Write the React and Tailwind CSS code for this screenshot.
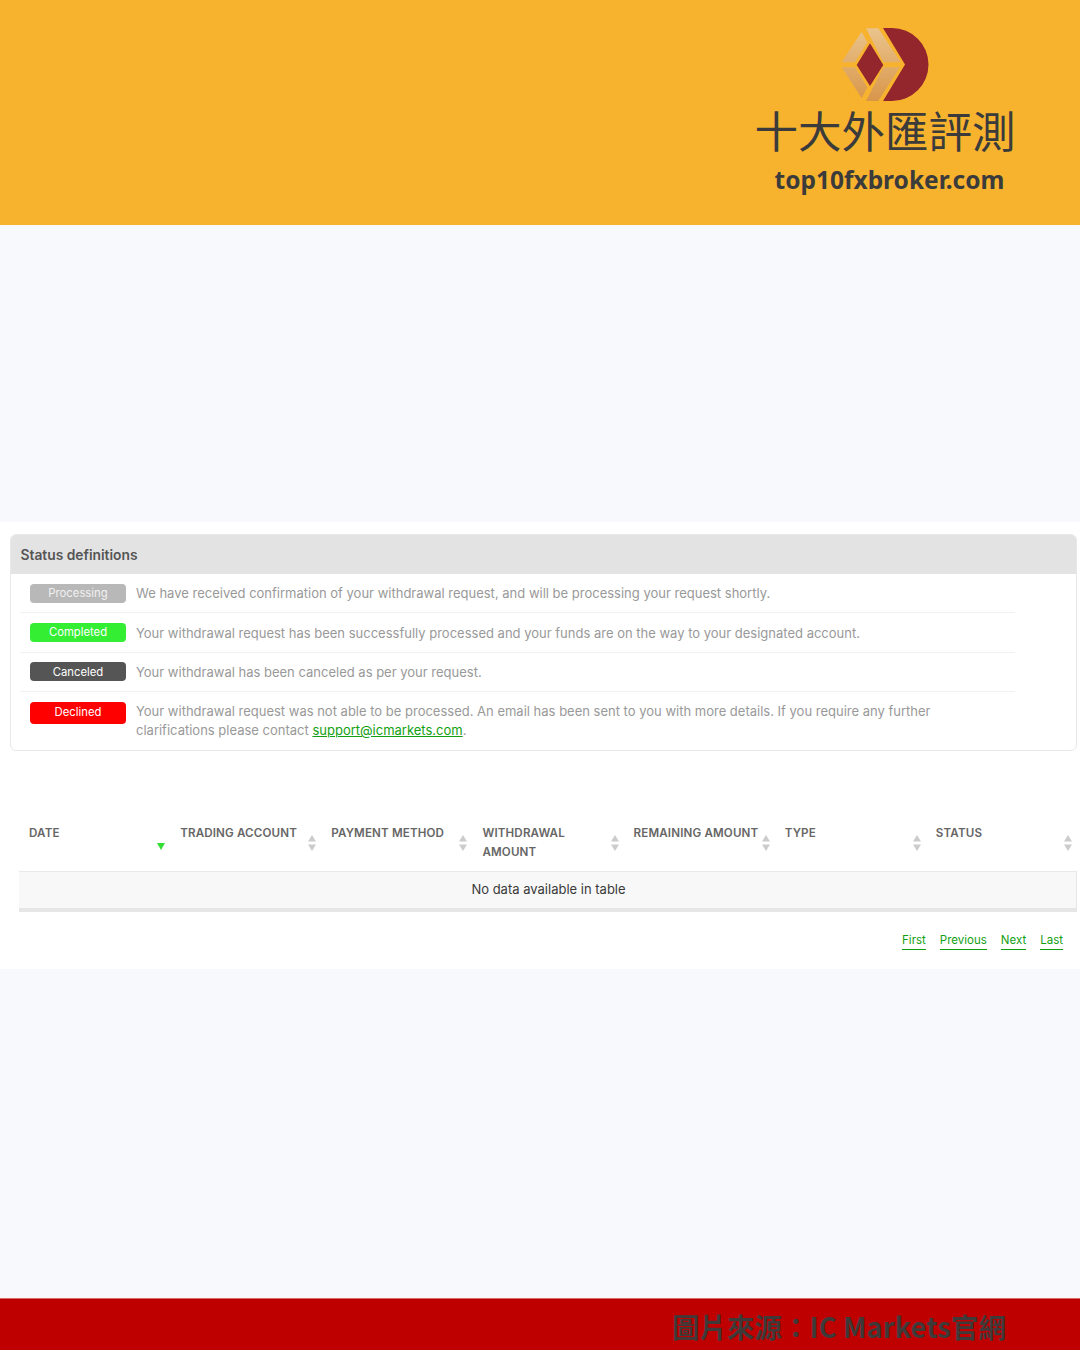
const sans = "font-['Inter','Liberation_Sans',sans-serif]";

const statuses = [
  { label: 'Processing', tone: 'bg-[#b8b8b8] text-[#f1f1f1]', text: 'We have received confirmation of your withdrawal request, and will be processing your request shortly.' },
  { label: 'Completed', tone: 'bg-[#33ee33] text-white', text: 'Your withdrawal request has been successfully processed and your funds are on the way to your designated account.' },
  { label: 'Canceled', tone: 'bg-[#555555] text-white', text: 'Your withdrawal has been canceled as per your request.' },
];

const columns = ['DATE', 'TRADING ACCOUNT', 'PAYMENT METHOD', 'WITHDRAWAL AMOUNT', 'REMAINING AMOUNT', 'TYPE', 'STATUS'];

function Logo() {
  return (
    <svg width="90" height="78" viewBox="0 0 90 78" className="block">
      <defs>
        <linearGradient id="gold" gradientUnits="userSpaceOnUse" x1="0" y1="2" x2="0" y2="75">
          <stop offset="0" stopColor="#eac48c" />
          <stop offset="1" stopColor="#d8964a" />
        </linearGradient>
      </defs>
      <path d="M43 2H52A36.5 36.5 0 0 1 52 75H43L65 38.5Z" fill="#93262d" />
      <path d="M26 2.3H38.3L60.7 36.3H43.3Z" fill="url(#gold)" />
      <path d="M21.7 5.7L27.3 16.3L15 36.3H1.7Z" fill="url(#gold)" />
      <path d="M1.7 41.3H15L27.3 61.3L21.7 72.3Z" fill="url(#gold)" />
      <path d="M43.3 41.3H60L38.3 75H26Z" fill="url(#gold)" />
      <path d="M30 17.3L43.3 39L30 60L16.7 39Z" fill="#93262d" />
    </svg>
  );
}

function SortIcon({ active }) {
  if (active) {
    return (
      <svg width="8" height="7" viewBox="0 0 8 7" className="mb-[21px] mr-[5px] shrink-0 self-end">
        <path d="M0 0H8L4 7Z" fill="#33dd33" />
      </svg>
    );
  }
  return (
    <svg width="8" height="16" viewBox="0 0 8 16" className="mb-[20px] mr-[5px] shrink-0 self-end">
      <path d="M4 0L8 6.5H0Z" fill="#cccccc" />
      <path d="M0 9.5H8L4 16Z" fill="#cccccc" />
    </svg>
  );
}

export default function App() {
  return (
    <div className={`flex min-h-[1350px] w-[1080px] flex-col overflow-hidden bg-[#f8f9fd] ${sans}`}>
      <header className="flex h-[225px] justify-end bg-[#f8b32e] pr-[64px] pt-[26px]">
        <div className="flex w-[262px] flex-col items-center">
          <Logo />
          <div className="mt-[-3px] whitespace-nowrap text-[43.5px] font-normal leading-[58px] text-[#3b3b3b] font-['Noto_Sans_CJK_TC',sans-serif]">
            十大外匯評測
          </div>
          <div className="ml-[9px] mt-[3px] whitespace-nowrap text-[24.5px] font-bold leading-[36px] text-[#3b3b3b] font-['Noto_Sans',sans-serif]">
            top10fxbroker.com
          </div>
        </div>
      </header>

      <div className="h-[297px]" />

      <main className="h-[447px] bg-white pt-[12px]">
        <section className="ml-[10px] h-[217px] w-[1067px] overflow-hidden rounded-[6px] border border-[#e8e8e8]">
          <h2 className="flex h-[39px] items-center bg-[#e3e3e3] pl-[9.5px] pt-[1px] text-[13.8px] font-semibold text-[#555555]">
            Status definitions
          </h2>
          <div className="ml-[9px] w-[995px]">
            {statuses.map((item) => (
              <div key={item.label} className="flex h-[39.4px] items-center border-b border-[#f1f1f1] pl-[10px]">
                <span className={`flex h-[19px] w-[96px] shrink-0 items-center justify-center rounded-[4px] text-[11.3px] ${item.tone}`}>
                  {item.label}
                </span>
                <p className="ml-[10px] translate-y-[0.5px] whitespace-nowrap text-[13px] text-[#999999]">{item.text}</p>
              </div>
            ))}
            <div className="flex pl-[10px] pt-[10px]">
              <span className="flex h-[22px] w-[96px] shrink-0 items-center justify-center rounded-[4px] bg-[#ff0000] pb-[2px] text-[11.3px] text-white">
                Declined
              </span>
              <p className="ml-[10px] text-[13px] leading-[19px] text-[#999999]">
                Your withdrawal request was not able to be processed. An email has been sent to you with more details. If you require any further
                <br />
                clarifications please contact <a href="#" className="text-[#12a012] underline">support@icmarkets.com</a>.
              </p>
            </div>
          </div>
        </section>

        <div className="ml-[19px] mt-[64px] w-[1058px]">
          <div className="grid h-[57px] grid-cols-7 border-b border-[#e9e9e9] pt-[9px]">
            {columns.map((name, index) => (
              <div key={name} className="flex justify-between pl-[10px]">
                <span className={`text-[11.6px] font-semibold leading-[19px] tracking-[0.15px] text-[#666666] ${name === 'WITHDRAWAL AMOUNT' ? 'w-[100px]' : 'whitespace-nowrap'}`}>
                  {name}
                </span>
                <SortIcon active={index === 0} />
              </div>
            ))}
          </div>
          <div className="flex h-[40px] items-center justify-center border-b-4 border-r border-[#e6e6e6] bg-[#f8f8f8] pl-[2px] text-[13px] text-[#3a3a3a]">
            No data available in table
          </div>
          <nav className="mt-[20px] flex justify-end gap-[14px] pr-[14px] text-[11.5px] leading-[17px] text-[#12a012]">
            {['First', 'Previous', 'Next', 'Last'].map((label) => (
              <a key={label} href="#" className="border-b border-[#12a012]">{label}</a>
            ))}
          </nav>
        </div>
      </main>

      <div className="h-[329px]" />

      <footer className="flex h-[52px] items-center justify-end border-t border-[#d66a6a] bg-[#bf0000] pr-[74px] pt-[2px]">
        <span className="whitespace-nowrap text-[27.5px] font-bold leading-[50px] text-[#3f3a3a] font-['Noto_Sans_CJK_TC',sans-serif]">
          圖片來源：IC Markets官網
        </span>
      </footer>
    </div>
  );
}
